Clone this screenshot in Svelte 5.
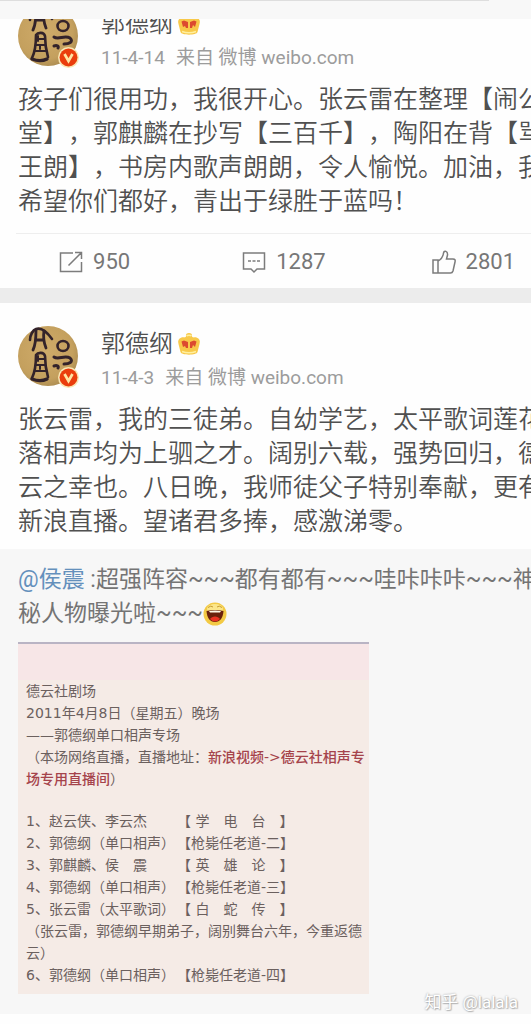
<script>
  const posts = [
    {
      name: '郭德纲',
      date: '11-4-14',
      lines: [
        '孩子们很用功，我很开心。张云雷在整理【闹公',
        '堂】，郭麒麟在抄写【三百千】，陶阳在背【骂',
        '王朗】，书房内歌声朗朗，令人愉悦。加油，我',
        '希望你们都好，青出于绿胜于蓝吗！'
      ],
      actions: [
        { icon: 'share', label: '转发', count: 950 },
        { icon: 'comment', label: '评论', count: 1287 },
        { icon: 'like', label: '赞', count: 2801 }
      ]
    },
    {
      name: '郭德纲',
      date: '11-4-3',
      lines: [
        '张云雷，我的三徒弟。自幼学艺，太平歌词莲花',
        '落相声均为上驷之才。阔别六载，强势回归，德',
        '云之幸也。八日晚，我师徒父子特别奉献，更有',
        '新浪直播。望诸君多捧，感激涕零。'
      ],
      quote: true
    }
  ];

  const programme = [
    { who: '赵云侠、李云杰', title: '【 学　电　台　】' },
    { who: '郭德纲（单口相声）', title: '【枪毙任老道-二】' },
    { who: '郭麒麟、侯　震', title: '【 英　雄　论　】' },
    { who: '郭德纲（单口相声）', title: '【枪毙任老道-三】' },
    { who: '张云雷（太平歌词）', title: '【 白　蛇　传　】', note: '（张云雷，郭德纲早期弟子，阔别舞台六年，今重返德云）' },
    { who: '郭德纲（单口相声）', title: '【枪毙任老道-四】' }
  ];
</script>

<main class="feed">
  <div class="previous"></div>

  {#each posts as post, i}
    <article class="post" class:scrolled={i === 0}>
      <header class="author">
        <svg class="avatar" viewBox="0 0 60 60" aria-hidden="true">
          <defs>
            <radialGradient id="gold{i}" cx="45%" cy="42%" r="62%">
              <stop offset="0" stop-color="#cfab6a" />
              <stop offset="0.75" stop-color="#c4a05e" />
              <stop offset="1" stop-color="#a98a50" />
            </radialGradient>
          </defs>
          <circle cx="30" cy="30" r="30" fill="url(#gold{i})" />
          <g fill="none" stroke="#33232a" stroke-linecap="round" stroke-linejoin="round">
            <path stroke-width="2.600" d="M12 14C12 9 15 4 18 3C24 1 29 6 34 13" />
            <path stroke-width="2.800" d="M18 4C18 11 18 18 15 24M26 5C25 11 26 17 28 22M18 14H26" />
            <path stroke-width="2.600" d="M18 29C20 26 26 26 27 30C27 38 28 44 30 51M18 29C18 38 17 46 14 52" />
            <path stroke-width="2" d="M18 33H26M18 39H27M17 45H28M20 30V35M22 39V43" />
            <path stroke-width="3.400" d="M14 53C19 55 25 55 29 53" />
            <ellipse cx="45" cy="20" rx="5.500" ry="5" stroke-width="2.600" />
            <path stroke-width="3" d="M36 31C40 34 47 29 52 32C56 36 51 38 46 38M36 40C39 39 41 40 40 42" />
          </g>
          <circle cx="50.500" cy="51.500" r="10.500" fill="#f8e6b4" />
          <circle cx="50.500" cy="51.500" r="9" fill="#ea3d0c" />
          <path d="M46.500 48L50.500 55L54.500 48" fill="none" stroke="#ffe3a0" stroke-width="2.700" />
        </svg>
        <div class="byline">
          <div class="name">
            <span>{post.name}</span>
            <svg class="crown" viewBox="0 0 24 24" aria-hidden="true">
              <path d="M4.500 5.500C6.500 5 8 6 9 4.500C8.500 2 10 1 12 1C14 1 15.500 2 15 4.500C16 6 17.500 5 19.500 5.500C22.500 6.500 23.500 9 22.500 12L20.500 20C20 23.500 4 23.500 3.500 20L1.500 12C0.500 9 1.500 6.500 4.500 5.500Z" fill="#f8c94a" />
              <path d="M9.500 4C10.500 3 13.500 3 14.500 4M5 19.500C9 21 15 21 19 19.500" stroke="#fff0a0" stroke-width="1.500" fill="none" />
              <path d="M4.500 9.500L7 8.500L11 10V16H9L8 14L6 15ZM13 10L17 8.500L19.500 9.500L18 15L16 13L15 16H13Z" fill="#dc4a30" />
            </svg>
          </div>
          <div class="meta"><time>{post.date}</time><span>来自 微博 weibo.com</span></div>
        </div>
      </header>

      <div class="body">
        {#each post.lines as line}<div>{line}</div>{/each}
      </div>

      {#if post.actions}
        <div class="actions">
          {#each post.actions as action}
            <button type="button" aria-label="{action.label} {action.count}">
              <svg class="icon" viewBox="0 0 24 24" aria-hidden="true">
                {#if action.icon === 'share'}
                  <path d="M14 3H1.500V21.500H22.500V12M9.500 15.500L22 3M16 2.500H22.500V9" />
                {:else if action.icon === 'comment'}
                  <path d="M1.500 3H22.500V19H15L12 22L9 19H1.500Z" />
                  <path d="M6 11H9M10.500 11H13.500M15 11H18" />
                {:else}
                  <path d="M1 10H6V23H1ZM6 11C9 9.500 11 7 11.500 3C12 0 16 1 15.500 5L14.500 9H21C23 9 23.500 10 23 12L21 21C20.500 22.500 20 23 18.500 23H6" />
                {/if}
              </svg>
              <span>{action.count}</span>
            </button>
          {/each}
        </div>
      {/if}

      {#if post.quote}
        <section class="quote">
          <div class="quote-text">
            <div><a href="#houzhen">@侯震</a> :超强阵容~~~都有都有~~~哇咔咔咔~~~神</div>
            <div class="with-face">
              <span>秘人物曝光啦~~~</span>
              <svg class="face" viewBox="0 0 24 24" aria-hidden="true">
                <circle cx="12" cy="12" r="11.500" fill="#f3ca45" />
                <ellipse cx="12" cy="7" rx="8" ry="5" fill="#fbe68a" />
                <path d="M5 5.500Q8 3 10 5M14 5Q16 3 19 5.500" fill="none" stroke="#c79a30" stroke-width="1" />
                <path d="M3.500 9Q12 7 20.500 9C20 16 17 20 12 20S4 16 3.500 9Z" fill="#6a210c" />
                <path d="M6 9Q12 8 18 9L17 10.500H7Z" fill="#fffbe8" />
                <path d="M7 17C9 13.500 15 13.500 17 17Q12 22 7 17Z" fill="#e93323" />
              </svg>
            </div>
          </div>

          <div class="poster">
            <div class="poster-band"></div>
            <div class="poster-text">
              <div>德云社剧场</div>
              <div>2011年4月8日（星期五）晚场</div>
              <div>——郭德纲单口相声专场</div>
              <div>（本场网络直播，直播地址：<em>新浪视频-&gt;德云社相声专场专用直播间</em>）</div>
              <ul>
                {#each programme as item, n}
                  <li>
                    <span>{n + 1}、</span><span>{item.who}</span><span>{item.title}</span>
                    {#if item.note}<p>{item.note}</p>{/if}
                  </li>
                {/each}
              </ul>
            </div>
          </div>
        </section>
      {/if}
    </article>
  {/each}

  <div class="watermark">知乎 @lalala</div>
</main>

<style>
  :global(body) {
    margin: 0;
    background: #fefefe;
  }
  .feed {
    position: relative;
    overflow: hidden;
    padding-bottom: 10px;
    font-family: Roboto, "Noto Sans CJK SC", sans-serif;
    font-weight: 350;
    text-spacing-trim: space-all;
    color: #505050;
  }
  .previous {
    height: 19px;
    box-sizing: border-box;
    background: linear-gradient(to right, #dedede 92%, #f8f8f8 92%) 0 0 / 100% 1px no-repeat #f8f8f8;
  }
  .post {
    background: #fefefe;
    overflow: hidden;
    padding-top: 23px;
  }
  .post.scrolled {
    padding-top: 0;
    border-bottom: 15px solid #ececec;
  }
  .scrolled .author {
    margin-top: -13px;
  }
  .author {
    display: flex;
    gap: 23px;
    padding-left: 18px;
    height: 60px;
  }
  .avatar {
    width: 60px;
    height: 60px;
    flex: none;
    overflow: visible;
  }
  .byline {
    white-space: nowrap;
  }
  .name {
    display: flex;
    align-items: center;
    gap: 4px;
    height: 36px;
    font-size: 24px;
    line-height: 36px;
  }
  .crown {
    width: 24px;
    height: 24px;
  }
  .meta {
    display: flex;
    gap: 11px;
    margin-top: 2px;
    font-size: 19px;
    line-height: 28px;
    font-weight: 400;
    color: #9c9c9c;
  }
  .body {
    padding: 17px 0 10px 18px;
    font-size: 25px;
    line-height: 34px;
    white-space: nowrap;
  }
  .actions {
    display: grid;
    grid-template-columns: repeat(3, 1fr);
    width: calc(100% + 37px);
    margin-top: 4px;
    background: linear-gradient(#eee, #eee) 16px 0 / 100% 1px no-repeat;
  }
  button {
    display: flex;
    align-items: center;
    justify-content: center;
    gap: 10px;
    height: 55px;
    padding: 2px 0 0;
    border: 0;
    background: none;
    font: 400 22px Roboto, sans-serif;
    color: #777;
  }
  .icon {
    width: 24px;
    height: 24px;
    fill: none;
    stroke: #7c7c7c;
    stroke-width: 1.5;
  }
  .quote {
    background: #f7f7f7;
    padding: 14px 0 20px 18px;
  }
  .quote-text {
    font-size: 23px;
    font-weight: 400;
    line-height: 34px;
    white-space: nowrap;
    color: #747474;
  }
  a {
    color: #6490bc;
    text-decoration: none;
  }
  .with-face {
    display: flex;
    align-items: center;
  }
  .face {
    width: 24px;
    height: 24px;
  }
  .poster {
    width: 351px;
    margin-top: 11px;
    background: #f5ebe6;
  }
  .poster-band {
    height: 36px;
    border-top: 2px solid #b9b4c4;
    background: #f7e6e7;
  }
  .poster-text {
    padding: 0 0 8px 8px;
    font: 400 14px/22px "DejaVu Sans", "Noto Sans CJK SC", sans-serif;
    color: #6b605e;
  }
  em {
    font-style: normal;
    font-weight: 500;
    color: #a5434b;
  }
  ul {
    list-style: none;
    margin: 20px 0 0;
    padding: 0;
  }
  li {
    display: grid;
    grid-template-columns: 23px 128px 1fr;
  }
  p {
    grid-column: 1 / -1;
    margin: 0;
  }
  .watermark {
    position: absolute;
    right: 13px;
    bottom: 10px;
    font: 400 17px/24px Roboto, "Noto Sans CJK SC", sans-serif;
    color: #fff;
    text-shadow: 0 0 2px #999, 1px 1px 1px #bbb;
  }
</style>
